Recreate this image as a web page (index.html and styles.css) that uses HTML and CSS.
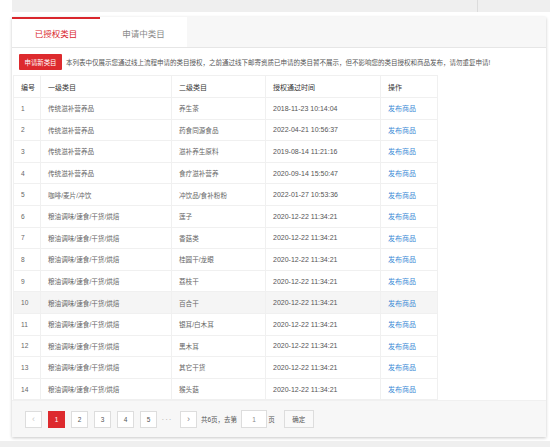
FILE: index.html
```html
<!DOCTYPE html>
<html lang="zh-CN">
<head>
<meta charset="utf-8">
<title>已授权类目</title>
<link rel="stylesheet" href="styles.css">
</head>
<body>
<div class="topband"><div class="topband-left"></div></div>
<div class="card">
  <div class="tabs">
    <div class="tab active">已授权类目</div>
    <div class="tab">申请中类目</div>
  </div>
  <div class="body">
    <div class="notice">
      <span class="btn-red">申请新类目</span>
      <span class="notice-text">本列表中仅展示您通过线上流程申请的类目授权，之前通过线下邮寄资质已申请的类目暂不展示，但不影响您的类目授权和商品发布，请勿重复申请!</span>
    </div>
    <table class="grid">
      <colgroup>
        <col class="c1"><col class="c2"><col class="c3"><col class="c4"><col class="c5">
      </colgroup>
      <thead>
        <tr><th>编号</th><th>一级类目</th><th>二级类目</th><th>授权通过时间</th><th>操作</th></tr>
      </thead>
      <tbody>
        <tr><td>1</td><td>传统滋补营养品</td><td>养生茶</td><td class="dt">2018-11-23 10:14:04</td><td><a class="lnk">发布商品</a></td></tr>
        <tr><td>2</td><td>传统滋补营养品</td><td>药食同源食品</td><td class="dt">2022-04-21 10:56:37</td><td><a class="lnk">发布商品</a></td></tr>
        <tr><td>3</td><td>传统滋补营养品</td><td>滋补养生原料</td><td class="dt">2019-08-14 11:21:16</td><td><a class="lnk">发布商品</a></td></tr>
        <tr><td>4</td><td>传统滋补营养品</td><td>食疗滋补营养</td><td class="dt">2020-09-14 15:50:47</td><td><a class="lnk">发布商品</a></td></tr>
        <tr><td>5</td><td>咖啡/麦片/冲饮</td><td>冲饮品/食补粉粉</td><td class="dt">2022-01-27 10:53:36</td><td><a class="lnk">发布商品</a></td></tr>
        <tr><td>6</td><td>粮油调味/速食/干货/烘焙</td><td>莲子</td><td class="dt">2020-12-22 11:34:21</td><td><a class="lnk">发布商品</a></td></tr>
        <tr><td>7</td><td>粮油调味/速食/干货/烘焙</td><td>香菇类</td><td class="dt">2020-12-22 11:34:21</td><td><a class="lnk">发布商品</a></td></tr>
        <tr><td>8</td><td>粮油调味/速食/干货/烘焙</td><td>桂圆干/龙眼</td><td class="dt">2020-12-22 11:34:21</td><td><a class="lnk">发布商品</a></td></tr>
        <tr><td>9</td><td>粮油调味/速食/干货/烘焙</td><td>荔枝干</td><td class="dt">2020-12-22 11:34:21</td><td><a class="lnk">发布商品</a></td></tr>
        <tr class="hover"><td>10</td><td>粮油调味/速食/干货/烘焙</td><td>百合干</td><td class="dt">2020-12-22 11:34:21</td><td><a class="lnk">发布商品</a></td></tr>
        <tr><td>11</td><td>粮油调味/速食/干货/烘焙</td><td>银耳/白木耳</td><td class="dt">2020-12-22 11:34:21</td><td><a class="lnk">发布商品</a></td></tr>
        <tr><td>12</td><td>粮油调味/速食/干货/烘焙</td><td>黑木耳</td><td class="dt">2020-12-22 11:34:21</td><td><a class="lnk">发布商品</a></td></tr>
        <tr><td>13</td><td>粮油调味/速食/干货/烘焙</td><td>其它干货</td><td class="dt">2020-12-22 11:34:21</td><td><a class="lnk">发布商品</a></td></tr>
        <tr><td>14</td><td>粮油调味/速食/干货/烘焙</td><td>猴头菇</td><td class="dt">2020-12-22 11:34:21</td><td><a class="lnk">发布商品</a></td></tr>
      </tbody>
    </table>
  </div>
  <div class="pager">
    <span class="pg pg-dis">&lsaquo;</span>
    <span class="pg pg-on">1</span>
    <span class="pg">2</span>
    <span class="pg">3</span>
    <span class="pg">4</span>
    <span class="pg">5</span>
    <span class="pg-dots">···</span>
    <span class="pg pg-next">&rsaquo;</span>
    <span class="pg-text">共6页，去第</span>
    <span class="pg-input">1</span>
    <span class="pg-text">页</span>
    <span class="pg-ok">确定</span>
  </div>
</div>
<div class="bottomband"></div>
</body>
</html>
```

FILE: styles.css
```css
html, body {
  margin: 0;
  padding: 0;
  background: #fff;
  font-family: "Liberation Sans", "Noto Sans CJK SC", sans-serif;
  color: #666;
}

.topband {
  height: 12px;
  margin-left: 12px;
  background: #efefef;
}
.topband-left {
  width: 466px;
  height: 12px;
  border-right: 1px solid #dcdcdc;
  box-sizing: border-box;
}

.card {
  margin: 5px 0 0 12px;
  width: 534px;
  background: #fff;
  box-shadow: 0 1px 3px rgba(0, 0, 0, 0.22);
}

.tabs {
  display: flex;
  height: 30px;
  background: #f7f7f7;
  border-bottom: 1px solid #e6e6e6;
}
.tab {
  width: 88px;
  background: #fff;
  border-top: 2px solid transparent;
  box-sizing: border-box;
  display: flex;
  align-items: center;
  justify-content: center;
  font-size: 8.5px;
  color: #888;
}
.tab.active {
  border-top-color: #d9262c;
  color: #d9262c;
}
.tab + .tab {
  width: 87px;
}

.body {
  padding: 6px 0 0 1px;
}

.notice {
  display: flex;
  align-items: center;
  height: 16px;
  padding-left: 6px;
  margin-bottom: 5px;
}
.btn-red {
  width: 43px;
  height: 16px;
  background: #dd2a2e;
  color: #fff;
  font-size: 6.4px;
  display: flex;
  align-items: center;
  justify-content: center;
  border-radius: 1px;
}
.notice-text {
  margin-left: 4px;
  font-size: 6.5px;
  color: #555;
  white-space: nowrap;
}

.grid {
  width: 424px;
  border-collapse: collapse;
  table-layout: fixed;
}
.c1 { width: 27px; }
.c2 { width: 131px; }
.c3 { width: 94px; }
.c4 { width: 115px; }
.c5 { width: 57px; }

.grid th,
.grid td {
  border: 1px solid #f0f0f0;
  padding: 0 0 0 7px;
  text-align: left;
  white-space: nowrap;
  overflow: hidden;
}
.grid th {
  height: 21px;
  font-size: 7px;
  font-weight: normal;
  color: #333;
}
.grid td {
  height: 20.6px;
  font-size: 6.6px;
  color: #666;
}
.grid td.dt {
  font-size: 7px;
  color: #555;
}
.grid tr.hover td {
  background: #f5f5f5;
}
.lnk {
  color: #3d8bd6;
  font-size: 7px;
}

.pager {
  height: 37px;
  background: #f7f7f7;
  display: flex;
  align-items: center;
  padding-left: 13px;
  border-top: 1px solid #f0f0f0;
  box-sizing: border-box;
}
.pg {
  width: 17px;
  height: 17px;
  box-sizing: border-box;
  border: 1px solid #ddd;
  background: #fff;
  font-size: 6.5px;
  color: #555;
  display: flex;
  align-items: center;
  justify-content: center;
  margin-right: 6px;
}
.pg-dis {
  color: #ccc;
  font-size: 9px;
}
.pg-next {
  color: #888;
  font-size: 9px;
}
.pg-on {
  background: #dd2a2e;
  border-color: #dd2a2e;
  color: #fff;
}
.pg-dots {
  width: 14px;
  margin: 0 6px 0 -3px;
  font-size: 8px;
  color: #aaa;
  text-align: center;
  letter-spacing: 1px;
}
.pg-text {
  font-size: 6.5px;
  color: #555;
  margin-right: 2px;
  margin-left: -2px;
}
.pg-input {
  width: 26px;
  height: 18px;
  box-sizing: border-box;
  border: 1px solid #ddd;
  background: #fff;
  font-size: 6.5px;
  color: #888;
  display: flex;
  align-items: center;
  justify-content: center;
  margin: 0 3px 0 2px;
}
.pg-ok {
  width: 30px;
  height: 18px;
  box-sizing: border-box;
  border: 1px solid #ddd;
  background: #f9f9f9;
  font-size: 6.5px;
  color: #555;
  display: flex;
  align-items: center;
  justify-content: center;
  margin-left: 7px;
}

.bottomband {
  margin-top: 4px;
  height: 10px;
  background: #efefef;
}
```
